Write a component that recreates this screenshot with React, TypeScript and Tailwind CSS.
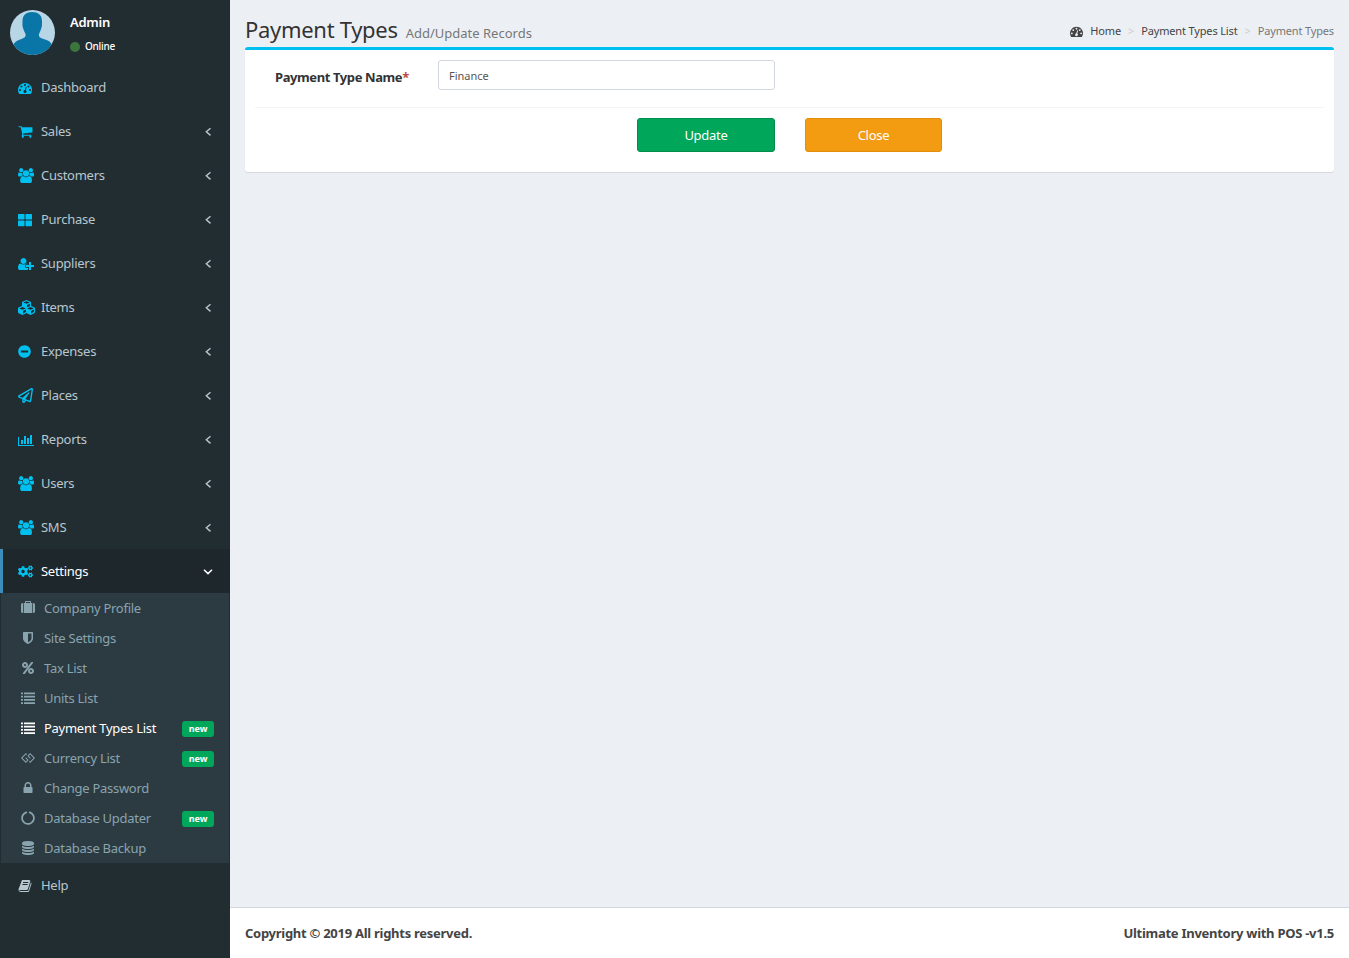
import type { ComponentType } from "react"
import {
  FaCircleNotch,
  FaCogs,
  FaCubes,
  FaGg,
  FaMinusCircle,
  FaRegPaperPlane,
  FaThLarge,
} from "react-icons/fa"

type IconProps = { className?: string }
type Icon = ComponentType<IconProps>

// font-awesome 4 shapes, the 5 set in react-icons draws these differently
const fa4 = (d: string, width = 1792): Icon => {
  const Glyph = ({ className }: IconProps) => (
    <svg viewBox={`0 0 ${width} 1792`} fill="currentColor" className={className}>
      <path d={d} />
    </svg>
  )
  return Glyph
}

const Dashboard = fa4(
  "M384 1152q0-53-37.500-90.500t-90.500-37.500-90.500 37.500-37.500 90.500 37.500 90.500 90.500 37.500 90.500-37.500 37.500-90.500zm192-448q0-53-37.500-90.500t-90.500-37.500-90.500 37.500-37.500 90.500 37.500 90.500 90.500 37.500 90.500-37.500 37.500-90.500zm428 481l101-382q6-26-7.500-48.500t-38.500-29.500-48 6.500-30 39.500l-101 382q-60 5-107 43.500t-63 98.500q-20 77 20 146t117 89 146-20 89-117q16-60-6-117t-72-91zm660-33q0-53-37.500-90.500t-90.500-37.500-90.500 37.500-37.500 90.500 37.500 90.500 90.500 37.500 90.500-37.500 37.500-90.500zm-640-640q0-53-37.500-90.500t-90.500-37.500-90.500 37.500-37.500 90.500 37.500 90.500 90.500 37.500 90.500-37.500 37.500-90.500zm448 192q0-53-37.500-90.500t-90.500-37.500-90.500 37.500-37.500 90.500 37.500 90.500 90.500 37.500 90.500-37.500 37.500-90.500zm320 448q0 261-141 483-19 29-54 29h-1400q-35 0-54-29-141-221-141-483 0-182 71-348t191-286 286-191 348-71 348 71 286 191 191 286 71 348z",
)
const Cart = fa4(
  "M704 1536q0 52-38 90t-90 38-90-38-38-90 38-90 90-38 90 38 38 90zm896 0q0 52-38 90t-90 38-90-38-38-90 38-90 90-38 90 38 38 90zm128-1088v512q0 24-16.500 42.500t-40.500 21.500l-1044 122q13 60 13 70 0 16-24 64h920q26 0 45 19t19 45-19 45-45 19h-1024q-26 0-45-19t-19-45q0-11 8-31.500t16-36 21.500-40 15.500-29.500l-177-823h-204q-26 0-45-19t-19-45 19-45 45-19h256q16 0 28.500 6.500t19.500 15.500 13 24.500 8 26 5.500 29.500 4.500 26h1201q26 0 45 19t19 45z",
)
const Users = fa4(
  "M593 896q-162 5-265 128h-134q-82 0-138-40.500t-56-118.500q0-353 124-353 6 0 43.500 21t97.500 42.500 119 21.500q67 0 133-23-5 37-5 66 0 139 81 256zm1071 637q0 120-73 189.500t-194 69.500h-874q-121 0-194-69.500t-73-189.500q0-53 3.500-103.500t14-109 26.500-108.500 43-97.500 62-81 85.500-53.500 111.500-20q10 0 43 21.500t73 48 107 48 135 21.500 135-21.500 107-48 73-48 43-21.500q61 0 111.500 20t85.500 53.500 62 81 43 97.500 26.500 108.500 14 109 3.500 103.500zm-1024-1277q0 106-75 181t-181 75-181-75-75-181 75-181 181-75 181 75 75 181zm704 384q0 159-112.500 271.500t-271.500 112.500-271.500-112.500-112.500-271.500 112.500-271.500 271.500-112.500 271.500 112.500 112.500 271.500zm576 225q0 78-56 118.500t-138 40.500h-134q-103-123-265-128 81-117 81-256 0-29-5-66 66 23 133 23 59 0 119-21.500t97.500-42.500 43.500-21q124 0 124 353zm-128-609q0 106-75 181t-181 75-181-75-75-181 75-181 181-75 181 75 75 181z",
  1920,
)
const UserPlus = fa4(
  "M704 896q-159 0-271.500-112.500t-112.500-271.500 112.500-271.500 271.500-112.500 271.500 112.500 112.500 271.500-112.500 271.500-271.500 112.500zm960 128h352q13 0 22.500 9.500t9.500 22.500v192q0 13-9.500 22.500t-22.500 9.500h-352v352q0 13-9.500 22.500t-22.500 9.500h-192q-13 0-22.500-9.500t-9.500-22.500v-352h-352q-13 0-22.500-9.500t-9.500-22.500v-192q0-13 9.500-22.500t22.500-9.500h352v-352q0-13 9.500-22.500t22.500-9.500h192q13 0 22.500 9.500t9.500 22.500v352zm-736 224q0 52 38 90t90 38h256v238q-68 50-171 50h-874q-121 0-194-69t-73-190q0-53 3.500-103.500t14-109 26.500-108.500 43-97.500 62-81 85.500-53.500 111.500-20q19 0 39 17 79 61 154.500 91.500t164.500 30.500 164.500-30.500 154.500-91.500q20-17 39-17 132 0 217 96h-223q-52 0-90 38t-38 90v192z",
  2048,
)
const BarChart = fa4(
  "M640 896v512h-256v-512h256zm384-512v1024h-256v-1024h256zm1024 1152v128h-2048v-1152h128v1024h1920zm-640-896v768h-256v-768h256zm384-384v1152h-256v-1152h256z",
  2048,
)
const Suitcase = fa4(
  "M640 256h512v-128h-512v128zm-352 0v1280h-64q-92 0-158-66t-66-158v-832q0-92 66-158t158-66h64zm1120 0v1280h-1024v-1280h128v-160q0-40 28-68t68-28h576q40 0 68 28t28 68v160h128zm384 224v832q0 92-66 158t-158 66h-64v-1280h64q92 0 158 66t66 158z",
)
const Shield = fa4(
  "M1344 960v-640h-448v1137q119-63 213-137 235-184 235-360zm192-768v768q0 86-33.500 170.500t-83 150-118 127.500-126.500 103-121 77.500-89.500 49.500-42.500 20q-12 6-26 6t-26-6q-16-7-42.500-20t-89.500-49.500-121-77.500-126.500-103-118-127.500-83-150-33.500-170.500v-768q0-26 19-45t45-19h1152q26 0 45 19t19 45z",
)
const Percent = fa4(
  "M1408 1280q0-52-38-90t-90-38-90 38-38 90 38 90 90 38 90-38 38-90zm-768-768q0-52-38-90t-90-38-90 38-38 90 38 90 90 38 90-38 38-90zm1024 768q0 159-112.500 271.500t-271.500 112.500-271.500-112.500-112.500-271.500 112.500-271.500 271.500-112.500 271.500 112.500 112.500 271.500zm-96-1088q0 20-13 38l-1056 1408q-19 26-51 26h-160q-26 0-45-19t-19-45q0-20 13-38l1056-1408q19-26 51-26h160q26 0 45 19t19 45zm-672 320q0 159-112.500 271.500t-271.500 112.500-271.500-112.500-112.500-271.500 112.500-271.500 271.500-112.500 271.500 112.500 112.500 271.500z",
)
const List = fa4(
  "M0 192h256v224h-256zM384 192h1408v224h-1408zM0 608h256v224h-256zM384 608h1408v224h-1408zM0 1024h256v224h-256zM384 1024h1408v224h-1408zM0 1440h256v224h-256zM384 1440h1408v224h-1408z",
)
const Lock = fa4(
  "M640 768h512v-192q0-106-75-181t-181-75-181 75-75 181v192zm832 96v576q0 40-28 68t-68 28h-960q-40 0-68-28t-28-68v-576q0-40 28-68t68-28h32v-192q0-184 132-316t316-132 316 132 132 316v192h32q40 0 68 28t28 68z",
)
const Database = fa4(
  "M896 768q237 0 443-43t325-127v170q0 69-103 128t-280 93.500-385 34.500-385-34.500-280-93.500-103-128v-170q119 84 325 127t443 43zm0 768q237 0 443-43t325-127v170q0 69-103 128t-280 93.500-385 34.500-385-34.500-280-93.500-103-128v-170q119 84 325 127t443 43zm0-384q237 0 443-43t325-127v170q0 69-103 128t-280 93.500-385 34.500-385-34.500-280-93.500-103-128v-170q119 84 325 127t443 43zm0-1152q208 0 385 34.500t280 93.500 103 128v128q0 69-103 128t-280 93.500-385 34.500-385-34.500-280-93.500-103-128v-128q0-69 103-128t280-93.500 385-34.500z",
)
const Book = fa4(
  "M1703 478q40 57 18 129l-275 906q-19 64-76.500 107.500t-122.500 43.500h-923q-77 0-148.500-53.500t-99.500-131.500q-24-67-2-127 0-4 3-27t4-37q1-8-3-21.500t-3-19.500q2-11 8-21t16.500-23.500 16.500-23.500q23-38 45-91.500t30-91.500q3-10 .5-30t-.5-28q3-11 17-28t17-23q21-36 42-92t25-90q1-9-2.500-32t.5-28q4-13 22-30.500t22-22.500q19-26 42.500-84.500t27.500-96.500q1-8-3-25.500t-2-26.500q2-8 9-18t18-23 17-21q8-12 16.500-30.500t15-35 16-36 19.500-32 26.500-23.500 36-11.500 47.500 5.500l-1 3q38-9 51-9h761q74 0 114 56t18 130l-274 906q-36 119-71.500 153.500t-128.500 34.500h-869q-27 0-38 15-11 16-1 43 24 70 144 70h923q29 0 56-15.500t35-41.500l300-987q7-22 5-57 38 15 59 43zm-1064 2q-4 13 2 22.500t20 9.500h608q13 0 25.500-9.500t16.500-22.500l21-64q4-13-2-22.500t-20-9.500h-608q-13 0-25.500 9.500t-16.500 22.500zm-83 256q-4 13 2 22.500t20 9.500h608q13 0 25.500-9.500t16.500-22.500l21-64q4-13-2-22.500t-20-9.500h-608q-13 0-25.500 9.500t-16.500 22.500z",
)

const AngleLeft = () => (
  <svg viewBox="0 0 14 14" fill="none" stroke="currentColor" strokeWidth="1.4" className="w-[14px] h-[14px]">
    <path d="M9.500 3.200 5.300 6.800l4.200 3.600" />
  </svg>
)

const AngleDown = () => (
  <svg viewBox="0 0 14 14" fill="none" stroke="currentColor" strokeWidth="1.5" className="w-[14px] h-[14px]">
    <path d="M3 4.800l4 3.800 4-3.800" />
  </svg>
)

type MenuItem = { label: string; icon: Icon; size?: string; arrow?: boolean }
type SubItem = { label: string; icon: Icon; badge?: boolean; active?: boolean }

const topMenu: MenuItem[] = [
  { label: "Dashboard", icon: Dashboard },
  { label: "Sales", icon: Cart, size: "h-[15px] w-auto", arrow: true },
  { label: "Customers", icon: Users, size: "h-[15px] w-auto", arrow: true },
  { label: "Purchase", icon: FaThLarge, size: "w-[14px] h-[14px]", arrow: true },
  { label: "Suppliers", icon: UserPlus, arrow: true },
  { label: "Items", icon: FaCubes, size: "w-[17px] h-[17px]", arrow: true },
  { label: "Expenses", icon: FaMinusCircle, size: "w-[13px] h-[13px]", arrow: true },
  { label: "Places", icon: FaRegPaperPlane, size: "w-[15px] h-[15px]", arrow: true },
  { label: "Reports", icon: BarChart, arrow: true },
  { label: "Users", icon: Users, size: "h-[15px] w-auto", arrow: true },
  { label: "SMS", icon: Users, size: "h-[15px] w-auto", arrow: true },
]

const subMenu: SubItem[] = [
  { label: "Company Profile", icon: Suitcase },
  { label: "Site Settings", icon: Shield },
  { label: "Tax List", icon: Percent },
  { label: "Units List", icon: List },
  { label: "Payment Types List", icon: List, badge: true, active: true },
  { label: "Currency List", icon: FaGg, badge: true },
  { label: "Change Password", icon: Lock },
  { label: "Database Updater", icon: FaCircleNotch, badge: true },
  { label: "Database Backup", icon: Database },
]

const Avatar = () => (
  <svg viewBox="0 0 45 45" className="w-[45px] h-[45px] shrink-0">
    <defs>
      <clipPath id="avatar-clip">
        <circle cx="22.5" cy="22.5" r="22.5" />
      </clipPath>
    </defs>
    <g clipPath="url(#avatar-clip)">
      <rect width="45" height="45" fill="#b8d6e6" />
      <path
        d="M22 2c6 0 10 3 10 9 0 3 .2 5-.6 7-.6 2-1.400 4-2.400 6-.4 1.500 0 3 2 4 3 1.500 7 2 9 4 1 1 2 3 3 6v7H2v-7c1-3 2-5 4-6.500 2-1.500 5-2 7.500-3.500 2-1 2.500-2.500 2-4-1-2-2-4-2.500-6-.8-2-.5-4-.5-7 0-6 4-9 9.500-9z"
        fill="#0a76a8"
      />
    </g>
  </svg>
)

const App = () => {
  return (
    <div className="flex min-h-screen font-['Noto_Sans',sans-serif] text-[13px] tracking-[-0.27px] text-[#333]">
      <aside className="w-[230px] shrink-0 bg-[#222d32]">
        <div className="flex h-[65px] pl-[10px] pt-[10px]">
          <Avatar />
          <div className="ml-[15px]">
            <p className="text-[13px] leading-[24px] font-semibold text-white">Admin</p>
            <p className="flex items-center mt-[1px] text-[10px] leading-[23px] font-medium text-white">
              <span className="w-[10px] h-[10px] rounded-full bg-[#3c763d] mr-[5px]"></span>
              Online
            </p>
          </div>
        </div>
        <ul>
          {topMenu.map((m) => (
            <li key={m.label} className="flex items-center h-[44px] pt-px pl-[18px] pr-[15px] text-[#b8c7ce]">
              <span className="flex items-center w-[23px] shrink-0">
                <m.icon className={`${m.size ?? "h-[14px] w-auto"} text-[#00c0ef]`} />
              </span>
              <span className="flex-1">{m.label}</span>
              {m.arrow && <AngleLeft />}
            </li>
          ))}
          <li className="flex items-center h-[44px] pt-px pl-[15px] pr-[15px] border-l-[3px] border-[#3c8dbc] bg-[#1e282c] text-white">
            <span className="flex items-center w-[23px] shrink-0">
              <FaCogs className="w-[15px] h-[15px] text-[#00c0ef]" />
            </span>
            <span className="flex-1">Settings</span>
            <AngleDown />
          </li>
          <li className="mx-px bg-[#2c3b41]">
            <ul>
              {subMenu.map((s) => (
                <li
                  key={s.label}
                  className={`flex items-center h-[30px] pt-[2px] pl-[19px] pr-[15px] ${s.active ? "text-white" : "text-[#8aa4af]"}`}
                >
                  <span className="flex items-center pl-px w-[24px] shrink-0">
                    <s.icon className="w-[14px] h-[14px] mb-[2px]" />
                  </span>
                  <span className="flex-1">{s.label}</span>
                  {s.badge && (
                    <span className="w-[32px] h-[16px] rounded-[3px] bg-[#00a65a] text-white text-[9px] leading-[16px] tracking-normal font-bold text-center">
                      new
                    </span>
                  )}
                </li>
              ))}
            </ul>
          </li>
          <li className="flex items-center h-[44px] pt-[2px] pl-[18px] text-[#b8c7ce]">
            <span className="flex items-center w-[23px] shrink-0">
              <Book className="w-[14px] h-[14px]" />
            </span>
            <span>Help</span>
          </li>
        </ul>
      </aside>

      <div className="flex flex-col flex-1 min-w-0 bg-[#ecf0f5]">
        <main className="flex-1 px-[15px]">
          <div className="flex items-end justify-between h-[47px]">
            <h1 className="text-[22px] leading-[28px] tracking-[-0.3px] text-[#333]">
              Payment Types
              <small className="ml-[8px] text-[13px] tracking-normal text-[#777]">Add/Update Records</small>
            </h1>
            <ol className="flex items-center text-[11px] leading-[16px] tracking-[-0.15px] mb-[8px]">
              <li className="flex items-center text-[#444]">
                <Dashboard className="w-[13px] h-[13px] mr-[7px]" />
                Home
              </li>
              <li className="px-[7px] text-[#ccc]">&gt;</li>
              <li className="text-[#444]">Payment Types List</li>
              <li className="px-[7px] text-[#ccc]">&gt;</li>
              <li className="text-[#777]">Payment Types</li>
            </ol>
          </div>

          <section className="h-[125px] rounded-[3px] border-t-[3px] border-[#00c0ef] bg-white shadow-[0_1px_1px_rgba(0,0,0,0.1)]">
            <div className="flex items-start h-[58px] pt-[10px] pl-[20px] mx-[10px] border-b border-[#f4f4f4]">
              <label className="w-[163px] text-[13px] leading-[34px] tracking-[-0.4px] font-bold text-[#333]">
                Payment Type Name<span className="text-[#b94a48]">*</span>
              </label>
              <input
                readOnly
                value="Finance"
                className="w-[337px] h-[30px] rounded-[3px] border border-[#d2d6de] px-[10px] text-[11px] tracking-normal text-[#555] outline-none"
              />
            </div>
            <div className="flex pt-[10px] pl-[392px]">
              <button className="w-[138px] h-[34px] pt-px rounded-[3px] border border-[#008d4c] bg-[#00a65a] text-white text-[13px]">
                Update
              </button>
              <button className="ml-[30px] w-[137px] h-[34px] pt-px rounded-[3px] border border-[#e08e0b] bg-[#f39c12] text-white text-[13px]">
                Close
              </button>
            </div>
          </section>
        </main>

        <footer className="flex items-center justify-between h-[51px] pt-px px-[15px] border-t border-[#d2d6de] bg-white font-bold text-[#444] text-[13px]">
          <span>Copyright © 2019 All rights reserved.</span>
          <span>Ultimate Inventory with POS -v1.5</span>
        </footer>
      </div>
    </div>
  )
}

export default App
